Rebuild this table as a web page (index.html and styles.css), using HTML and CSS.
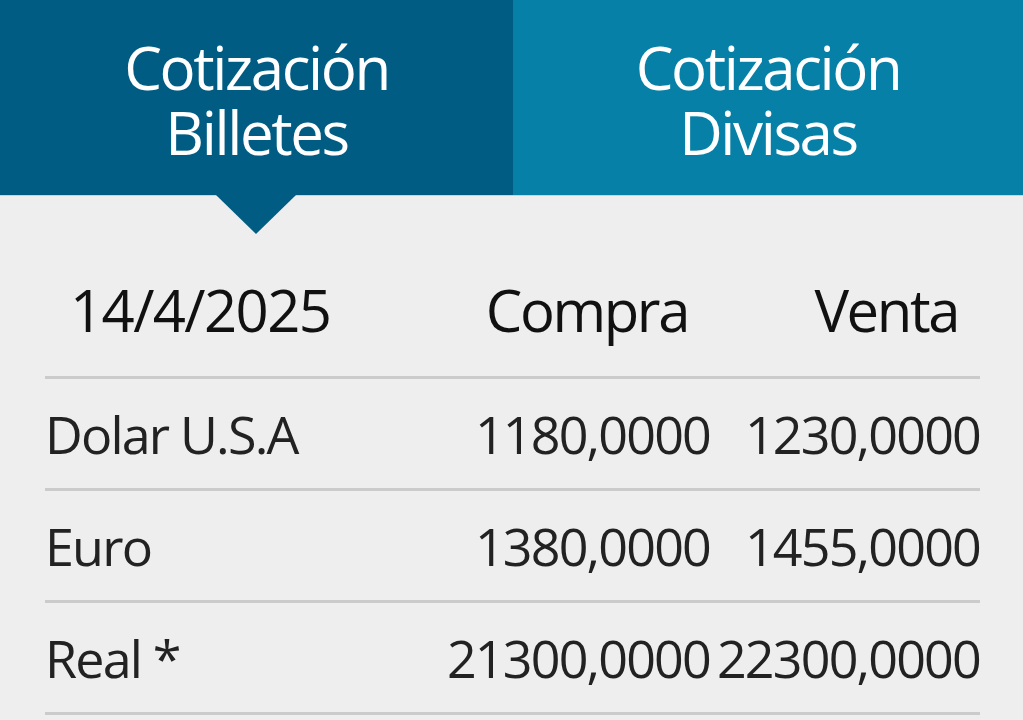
FILE: index.html
```html
<!DOCTYPE html>
<html lang="es">
<head>
    <meta charset="UTF-8">
    <meta name="viewport" content="width=device-width, initial-scale=1.0">
    <title>Cotizaciones</title>
    <link rel="stylesheet" href="styles.css">
</head>
<body>
    <div class="tabs">
        <div class="tab active">Cotización<br>Billetes</div>
        <div class="tab">Cotización<br>Divisas</div>
    </div>
    <div class="quotes">
        <div class="row head">
            <span class="name">14/4/2025</span>
            <span class="num">Compra</span>
            <span class="num">Venta</span>
        </div>
        <div class="row">
            <span class="name">Dolar U.S.A</span>
            <span class="num">1180,0000</span>
            <span class="num">1230,0000</span>
        </div>
        <div class="row">
            <span class="name">Euro</span>
            <span class="num">1380,0000</span>
            <span class="num">1455,0000</span>
        </div>
        <div class="row">
            <span class="name">Real *</span>
            <span class="num">21300,0000</span>
            <span class="num">22300,0000</span>
        </div>
    </div>
</body>
</html>
```

FILE: styles.css
```css
body {
    margin: 0;
    background-color: #eeeeee;
    color: #222222;
    font-family: "Open Sans", "Noto Sans", sans-serif;
    overflow: hidden;
}
.tabs {
    display: grid;
    grid-template-columns: 513px 1fr;
    height: 195px;
    border-bottom: 1px solid #c9d3d8;
}
.tab {
    position: relative;
    display: flex;
    align-items: center;
    justify-content: center;
    text-align: center;
    color: #ffffff;
    background-color: #0680a6;
    font-size: 60px;
    line-height: 65px;
    letter-spacing: -2.4px;
    padding-top: 4px;
}
.tab.active {
    background-color: #015c83;
}
.tab.active::after {
    content: "";
    position: absolute;
    left: 216px;
    bottom: -39px;
    border-left: 40px solid transparent;
    border-right: 40px solid transparent;
    border-top: 39px solid #015c83;
}
.quotes {
    margin: 0 43px 0 45px;
}
.row {
    display: grid;
    grid-template-columns: 1fr 265px 270px;
    align-items: center;
    height: 109px;
    border-bottom: 3px solid #cbcbcb;
    font-size: 52px;
    line-height: 102px;
    letter-spacing: -1.8px;
    white-space: nowrap;
}
.row .num {
    direction: rtl;
    text-align: right;
}
.row.head {
    height: 180px;
    align-items: end;
    font-size: 58px;
    line-height: 80px;
    letter-spacing: -2.4px;
    color: #111111;
}
.row.head span {
    padding-bottom: 26px;
}
.row.head .name {
    padding-left: 25px;
    letter-spacing: -1.6px;
}
.row.head .num {
    padding-right: 22px;
}
```
